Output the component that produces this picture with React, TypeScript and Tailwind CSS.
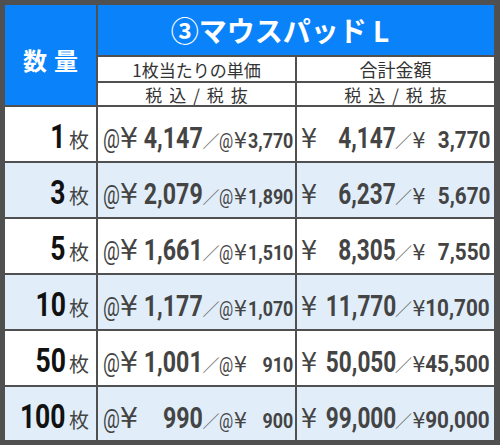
import React from 'react';

interface PriceRow {
  qty: string;
  unit: string;
  unitEx: string;
  total: string;
  totalEx: string;
}

const rows: PriceRow[] = [
  { qty: '1', unit: '4,147', unitEx: '3,770', total: '4,147', totalEx: '3,770' },
  { qty: '3', unit: '2,079', unitEx: '1,890', total: '6,237', totalEx: '5,670' },
  { qty: '5', unit: '1,661', unitEx: '1,510', total: '8,305', totalEx: '7,550' },
  { qty: '10', unit: '1,177', unitEx: '1,070', total: '11,770', totalEx: '10,700' },
  { qty: '50', unit: '1,001', unitEx: '910', total: '50,050', totalEx: '45,500' },
  { qty: '100', unit: '990', unitEx: '900', total: '99,000', totalEx: '90,000' },
];

const num = "font-['Roboto',sans-serif]";
const jp = "font-['Noto_Sans_CJK_JP','Noto_Sans_CJK_SC',sans-serif]";
const yen = "font-['DejaVu_Sans',sans-serif]";

// fixed-width slot; the text inside is squeezed horizontally like a condensed face
function Fit({
  w,
  end = true,
  className,
  children,
}: {
  w: string;
  end?: boolean;
  className: string;
  children: React.ReactNode;
}) {
  return (
    <span className={`flex ${w} ${end ? 'justify-end' : 'justify-start'}`}>
      <span
        className={`inline-block whitespace-nowrap leading-none ${end ? 'origin-right' : 'origin-left'} ${className}`}
      >
        {children}
      </span>
    </span>
  );
}

function Glyph({ w, className, children }: { w: string; className: string; children: React.ReactNode }) {
  return (
    <span className={`flex justify-center ${w}`}>
      <span className={`inline-block leading-none ${className}`}>{children}</span>
    </span>
  );
}

export default function App() {
  return (
    <div className="w-[500px] h-[445px] bg-[#505050] pt-[5px] pl-[5px] pr-[6px] pb-[5px]">
      <div className="grid h-full grid-cols-[91px_197px_197px] grid-rows-[50px_24px_22px_54px_54px_54px_54px_54px_53px] gap-[2px]">
        {/* 数量 header */}
        <div
          className={`row-span-3 flex items-center justify-center bg-[#0a82fa] pt-[10px] pl-[7px] ${jp} text-[24px] font-bold tracking-[7px] text-white`}
        >
          数量
        </div>

        {/* Title */}
        <div
          className={`col-span-2 flex items-center justify-center bg-[#0a82fa] pr-[32px] ${jp} text-[28px] font-bold text-white`}
        >
          <span>③マウスパッド&nbsp;L</span>
        </div>

        {/* Sub headers */}
        <div className={`flex items-center justify-center bg-white ${jp} text-[17px] leading-none text-[#333]`}>
          1枚当たりの単価
        </div>
        <div className={`flex items-center justify-center bg-white ${jp} text-[18px] leading-none text-[#333]`}>
          合計金額
        </div>
        <div
          className={`flex items-center justify-center bg-white pl-[7px] ${jp} text-[17px] leading-none tracking-[7px] text-[#333]`}
        >
          税込/税抜
        </div>
        <div
          className={`flex items-center justify-center bg-white pl-[7px] ${jp} text-[17px] leading-none tracking-[7px] text-[#333]`}
        >
          税込/税抜
        </div>

        {rows.map((r, i) => {
          const bg = i % 2 === 1 ? 'bg-[#e1eefa]' : 'bg-white';
          return (
            <React.Fragment key={r.qty}>
              <div className={`flex items-start justify-end pt-[12px] pr-[4px] ${bg}`}>
                <div className="flex items-baseline">
                  <Fit w="w-[50px]" className={`${num} text-[34px] font-bold text-[#111] scale-x-[0.78]`}>
                    {r.qty}
                  </Fit>
                  <Glyph w="w-[26px]" className={`${jp} text-[20px] text-[#444]`}>
                    枚
                  </Glyph>
                </div>
              </div>

              <div className={`flex items-start pt-[17px] pl-[5px] ${bg} text-[#444]`}>
                <div className="flex items-baseline">
                  <Fit w="w-[15px]" end={false} className={`${num} text-[25px] scale-x-[0.75]`}>
                    @
                  </Fit>
                  <Glyph w="w-[22px]" className={`${yen} text-[29px]`}>
                    ¥
                  </Glyph>
                  <Fit w="w-[63px]" className={`${num} text-[29px] font-bold scale-x-[0.8]`}>
                    {r.unit}
                  </Fit>
                  <Glyph w="w-[16px]" className={`${jp} text-[17px] text-[#666]`}>
                    ／
                  </Glyph>
                  <Fit w="w-[13px]" end={false} className={`${num} text-[21px] scale-x-[0.75]`}>
                    @
                  </Fit>
                  <Glyph w="w-[17px]" className={`${yen} text-[21px]`}>
                    ¥
                  </Glyph>
                  <Fit w="w-[44px]" className={`${num} text-[21px] font-bold scale-x-[0.85]`}>
                    {r.unitEx}
                  </Fit>
                </div>
              </div>

              <div className={`flex items-start pt-[17px] pl-[2px] ${bg} text-[#444]`}>
                <div className="flex items-baseline">
                  <Glyph w="w-[20px]" className={`${yen} text-[26px]`}>
                    ¥
                  </Glyph>
                  <Fit w="w-[77px]" className={`${num} text-[29px] font-bold scale-x-[0.78]`}>
                    {r.total}
                  </Fit>
                  <Glyph w="w-[15px]" className={`${jp} text-[17px] text-[#666]`}>
                    ／
                  </Glyph>
                  <Glyph w="w-[16px]" className={`${yen} text-[21px]`}>
                    ¥
                  </Glyph>
                  <Fit w="w-[63px]" className={`${num} text-[23px] font-bold scale-x-[0.9]`}>
                    {r.totalEx}
                  </Fit>
                </div>
              </div>
            </React.Fragment>
          );
        })}
      </div>
    </div>
  );
}
